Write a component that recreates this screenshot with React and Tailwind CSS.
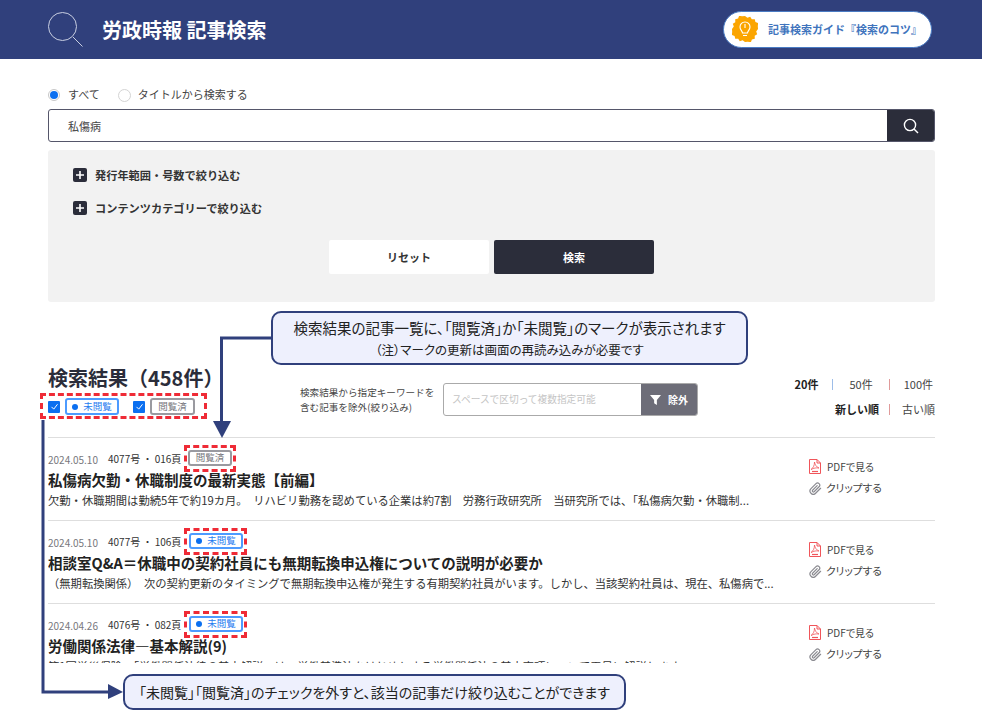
import React from "react";

const articles = [
  {
    date: "2024.05.10",
    issue: "4077号 ・ 016頁",
    read: true,
    title: "私傷病欠勤・休職制度の最新実態【前編】",
    text: "欠勤・休職期間は勤続5年で約19カ月。　リハビリ勤務を認めている企業は約7割　労務行政研究所　当研究所では、「私傷病欠勤・休職制...",
  },
  {
    date: "2024.05.10",
    issue: "4077号 ・ 106頁",
    read: false,
    title: "相談室Q&A＝休職中の契約社員にも無期転換申込権についての説明が必要か",
    text: "（無期転換関係）　次の契約更新のタイミングで無期転換申込権が発生する有期契約社員がいます。しかし、当該契約社員は、現在、私傷病で...",
  },
  {
    date: "2024.04.26",
    issue: "4076号 ・ 082頁",
    read: false,
    title: "労働関係法律―基本解説(9)",
    text: "第1回労災保険　「労働関係法律の基本解説」は、労働基準法をはじめとする労働関係法の基本事項について平易に解説します",
  },
];

const UnreadBadge = ({ className }) => (
  <span className={`flex items-center justify-center gap-[5px] rounded-[3px] border-2 border-[#4d9bff] bg-white text-[9.5px] text-[#1f7cf0] ${className}`}>
    <span className="w-[6px] h-[6px] rounded-full bg-[#0b6ff0]"></span>
    未閲覧
  </span>
);

const ReadBadge = ({ className }) => (
  <span className={`flex items-center justify-center rounded-[3px] border-2 border-[#9a9aa0] bg-white text-[9.5px] text-[#77777d] ${className}`}>
    閲覧済
  </span>
);

const Check = () => (
  <span className="flex items-center justify-center w-[12px] h-[12px] rounded-[1px] bg-[#0b6ff0]">
    <svg width="9" height="9" viewBox="0 0 12 12" fill="none" stroke="white" strokeWidth="1.3">
      <path d="M2 6.500 L5 9.500 L10 3" />
    </svg>
  </span>
);

const PdfIcon = () => (
  <svg width="12" height="15" viewBox="0 0 12 15" fill="none" stroke="#f0555a" strokeWidth="1">
    <path d="M0.500 0.500 H8 L11.500 4 V14.500 H0.500 Z" />
    <path d="M8 0.500 V4 H11.500" />
    <path d="M5.500 3 C5.500 7 4 9 2 10.500 C5 9 7 8.600 10 9 C7.500 8 6 6 5.500 3 Z" strokeWidth="0.8" />
    <path d="M3 12.500 H9" strokeWidth="1.2" />
  </svg>
);

const ClipIcon = () => (
  <svg width="13" height="13" viewBox="0 0 24 24" fill="none" stroke="#8a8a90" strokeWidth="2.2" strokeLinecap="round" strokeLinejoin="round">
    <path d="M21.400 11.600 12.200 20.800a6 6 0 0 1-8.500-8.500l9.200-9.200a4 4 0 0 1 5.700 5.700l-9.200 9.200a2 2 0 0 1-2.800-2.800l8.500-8.500" />
  </svg>
);

const PlusBox = () => (
  <span className="flex items-center justify-center w-[14px] h-[14px] rounded-[2px] bg-[#2b2d3a]">
    <svg width="8" height="8" viewBox="0 0 8 8" stroke="white" strokeWidth="1.6">
      <path d="M4 0 V8 M0 4 H8" />
    </svg>
  </span>
);

const Article = ({ item }) => (
  <div className="flex h-[83px] border-t border-[#dedede]">
    <div className="flex-1 min-w-0">
      <div className="flex items-center h-[23px] mt-[8px]">
        <span className="text-[10px] text-[#77777d] w-[60px] pt-[4px] whitespace-nowrap">{item.date}</span>
        <span className="text-[10px] text-[#333] w-[80px] pt-[2px] whitespace-nowrap">{item.issue}</span>
        <span className="relative">
          {item.read ? <ReadBadge className="w-[44px] h-[16px]" /> : <UnreadBadge className="w-[54px] h-[16px] ml-[1px]" />}
          <span className="absolute -left-[4px] -right-[4px] -top-[5px] -bottom-[6px] border-[3px] border-dashed border-[#ef2b36]"></span>
        </span>
      </div>
      <div className="text-[14.5px] font-bold text-[#222] leading-[20px] mt-[1px] whitespace-nowrap">{item.title}</div>
      <div className="text-[11.3px] text-[#333] leading-[16px] mt-[2px] whitespace-nowrap overflow-hidden w-[750px]">{item.text}</div>
    </div>
    <div className="w-[127px] pl-[1px] pt-[20px] text-[#444] [font-feature-settings:'palt']">
      <div className="flex items-center gap-[6px] h-[16px] text-[10px]"><PdfIcon />PDFで見る</div>
      <div className="flex items-center gap-[4px] h-[16px] mt-[6px] text-[10.7px]"><ClipIcon />クリップする</div>
    </div>
  </div>
);

const App = () => {
  return (
    <div className="relative w-[982px] h-[722px] overflow-hidden bg-white font-['Noto_Sans_CJK_JP',sans-serif]">
      <header className="flex items-center justify-between h-[59px] bg-[#30407c] pl-[48px] pr-[50px]">
        <div className="flex items-center">
          <svg width="36" height="36" viewBox="0 0 36 36" fill="none" stroke="#c9cfe2" strokeWidth="1">
            <circle cx="14.500" cy="14.500" r="14" />
            <path d="M25 25 L34.500 34.500" />
          </svg>
          <h1 className="ml-[18px] text-[20px] font-bold text-white [font-feature-settings:'palt']">労政時報 記事検索</h1>
        </div>
        <div className="flex items-center w-[209px] h-[37px] rounded-full bg-white border border-[#4a7cc4] pl-[8px] mb-[1px]">
          <svg width="26" height="26" viewBox="0 0 26 26">
            <path fill="#fba500" d="M13 0l2.400 1.800 2.800-1 1.600 2.500 3-.1.600 2.900 2.800 1-.4 3L26 13l-1.800 2.400 1 2.800-2.500 1.600.1 3-2.900.6-1 2.800-3-.4L13 26l-2.400-1.800-2.800 1-1.600-2.500-3 .1-.6-2.900-2.800-1 .4-3L0 13l1.800-2.400-1-2.800 2.500-1.600-.1-3 2.900-.6 1-2.800 3 .4z" />
            <path fill="none" stroke="#fff" strokeWidth="1.100" d="M10.500 17c0-2-2.500-3-2.500-6a5 5 0 0 1 10 0c0 3-2.500 4-2.500 6zM11 19.500h4M13 8v4" />
          </svg>
          <span className="ml-[10px] text-[11px] font-bold text-[#3f74bd] whitespace-nowrap">記事検索ガイド『検索のコツ』</span>
        </div>
      </header>

      <main className="px-[48px]">
        <div className="flex items-center h-[20px] mt-[26px] text-[11px] text-[#444]">
          <span className="flex items-center justify-center w-[12px] h-[12px] rounded-full border border-[#c8c8c8]">
            <span className="w-[8px] h-[8px] rounded-full bg-[#0b6ff0]"></span>
          </span>
          <span className="ml-[8px] pb-[2px]">すべて</span>
          <span className="ml-[18px] w-[13px] h-[13px] rounded-full border border-[#d4d4d4]"></span>
          <span className="ml-[7px] pb-[2px]">タイトルから検索する</span>
        </div>

        <div className="flex h-[33px] mt-[4px] w-[887px] rounded-[3px] overflow-hidden border border-[#55566a]">
          <div className="flex-1 flex items-center pl-[19px] pt-[1px] text-[11px] text-[#444]">私傷病</div>
          <div className="flex items-center justify-center w-[47px] bg-[#2b2d3a]">
            <svg width="16" height="16" viewBox="0 0 16 16" fill="none" stroke="white" strokeWidth="1.400">
              <circle cx="7" cy="7" r="5.600" />
              <path d="M11 11 L15 15" />
            </svg>
          </div>
        </div>

        <section className="w-[887px] h-[152px] mt-[8px] rounded-[3px] bg-[#f2f2f2] pl-[25px] pt-[17px]">
          <div className="flex items-center gap-[8px] h-[16px] text-[11.2px] font-bold text-[#333]"><PlusBox />発行年範囲・号数で絞り込む</div>
          <div className="flex items-center gap-[8px] h-[16px] mt-[17px] text-[11.2px] font-bold text-[#333]"><PlusBox />コンテンツカテゴリーで絞り込む</div>
          <div className="flex gap-[5px] mt-[24px] ml-[256px]">
            <button className="w-[160px] h-[34px] bg-white text-[11px] font-bold text-[#333] rounded-[2px]">リセット</button>
            <button className="w-[160px] h-[34px] bg-[#2b2d3a] text-[11px] font-bold text-white rounded-[2px]">検索</button>
          </div>
        </section>

        <section className="flex w-[887px] h-[135px] items-start">
          <div className="w-[252px] pt-[60px]">
            <h2 className="text-[20px] leading-[32px] font-bold text-[#2b2d3a] whitespace-nowrap">検索結果（458件）</h2>
            <div className="relative flex items-center h-[17px] mt-[4px]">
              <Check />
              <UnreadBadge className="w-[54px] h-[17px] ml-[5px]" />
              <span className="ml-[14px]"><Check /></span>
              <ReadBadge className="w-[45px] h-[17px] ml-[5px]" />
              <span className="absolute -left-[8px] top-[-5px] w-[167px] h-[26px] border-[3px] border-dashed border-[#ef2b36]"></span>
            </div>
          </div>
          <div className="w-[143px] pt-[83px] text-[9.6px] leading-[15px] text-[#444]">
            検索結果から指定キーワードを
            <br />
            含む記事を除外(絞り込み)
          </div>
          <div className="flex w-[255px] h-[33px] mt-[81px] rounded-[3px] overflow-hidden border border-[#aaa]">
            <div className="flex-1 flex items-center pl-[8px] text-[9.7px] text-[#c4c4c4]">スペースで区切って複数指定可能</div>
            <div className="flex items-center justify-center gap-[7px] w-[56px] bg-[#6d6d78] text-[10px] font-bold text-white">
              <svg width="11" height="11" viewBox="0 0 12 12" fill="white"><path d="M0 1H12L7.500 6.500V12L4.500 10V6.500Z" /></svg>
              除外
            </div>
          </div>
          <div className="flex-1 pt-[74px] text-[11px] text-[#444]">
            <div className="flex items-center justify-end h-[16px] pr-[2px]">
              <b className="text-[#222]">20件</b>
              <span className="ml-[14px] mr-[16px] w-px h-[11px] bg-[#9dbde8]"></span>
              <span>50件</span>
              <span className="ml-[16px] mr-[14px] w-px h-[11px] bg-[#e09a9a]"></span>
              <span>100件</span>
            </div>
            <div className="flex items-center justify-end h-[16px] mt-[9px]">
              <b className="text-[#222]">新しい順</b>
              <span className="ml-[10px] mr-[12px] w-px h-[11px] bg-[#e09a9a]"></span>
              <span>古い順</span>
            </div>
          </div>
        </section>

        <section className="w-[887px] h-[226px] overflow-hidden">
          {articles.map((item) => (
            <Article key={item.date + item.issue} item={item} />
          ))}
        </section>
      </main>

      <svg className="absolute left-0 top-0 pointer-events-none" width="982" height="722" fill="none">
        <path d="M272 338 H221.500 V424" stroke="#30407c" strokeWidth="3" />
        <path d="M213 421 H231 L222 438 Z" fill="#30407c" />
        <path d="M43 420 V692 H110" stroke="#30407c" strokeWidth="3" />
        <path d="M108 684 L123 692 L108 699 Z" fill="#30407c" />
      </svg>

      <div className="absolute left-[271px] top-[311px] w-[477px] h-[54px] flex flex-col items-center justify-center rounded-[10px] border-2 border-[#30407c] bg-[#eef0fd] text-[#222] [font-feature-settings:'palt']">
        <div className="text-[14.5px] leading-[24px]">検索結果の記事一覧に、「閲覧済」か「未閲覧」のマークが表示されます</div>
        <div className="text-[12.5px] leading-[20px]">（注）マークの更新は画面の再読み込みが必要です</div>
      </div>

      <div className="absolute left-[123px] top-[674px] w-[503px] h-[36px] flex items-center justify-center rounded-[10px] border-2 border-[#30407c] bg-[#eef0fd] text-[14px] text-[#222] whitespace-nowrap [font-feature-settings:'palt']">
        「未閲覧」「閲覧済」のチェックを外すと、該当の記事だけ絞り込むことができます
      </div>
    </div>
  );
};

export default App;
